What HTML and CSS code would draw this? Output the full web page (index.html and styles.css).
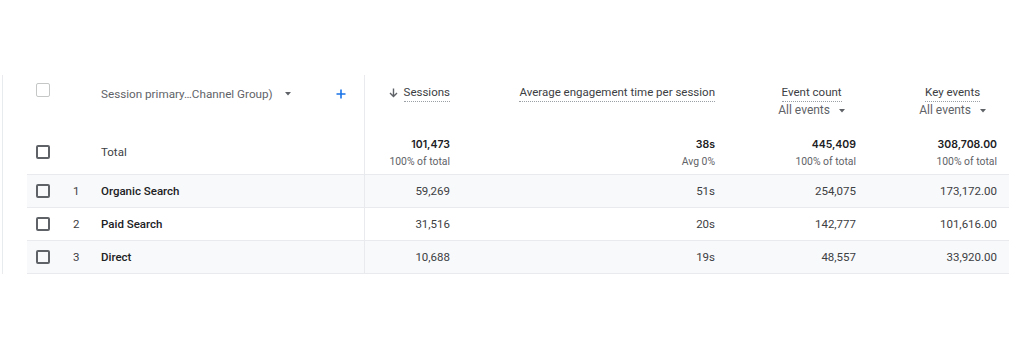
FILE: index.html
```html
<!DOCTYPE html>
<html lang="en">
<head>
<meta charset="utf-8">
<title>Report table</title>
<link rel="stylesheet" href="styles.css">
</head>
<body>
<div class="frame">
  <div class="table">
    <div class="row head">
      <div class="cell c-check"><span class="box disabled"></span></div>
      <div class="cell c-idx"></div>
      <div class="cell c-dim">
        <span class="dim-label">Session primary…Channel Group)</span>
        <svg class="caret" width="6" height="4" viewBox="0 0 6 4"><path d="M0 0h6L3 3.5z" fill="#5f6368"/></svg>
        <svg class="plus" width="10" height="10" viewBox="0 0 10 10"><path d="M5 0.5v9M0.5 5h9" stroke="#1a73e8" stroke-width="1.6" fill="none"/></svg>
      </div>
      <div class="cell c-num first">
        <span class="sort">
          <svg class="arrow" width="9" height="10" viewBox="0 0 9 10"><path d="M4.5 0.5v8M1 5l3.5 3.5L8 5" stroke="#5f6368" stroke-width="1.4" fill="none"/></svg>
          <span class="hlabel">Sessions</span>
        </span>
      </div>
      <div class="cell c-num"><span class="hlabel">Average engagement time per session</span></div>
      <div class="cell c-num">
        <span class="hstack">
          <span class="hlabel">Event count</span>
          <span class="picker">All events <svg width="6" height="4" viewBox="0 0 6 4"><path d="M0 0h6L3 3.5z" fill="#5f6368"/></svg></span>
        </span>
      </div>
      <div class="cell c-num last">
        <span class="hstack">
          <span class="hlabel">Key events</span>
          <span class="picker">All events <svg width="6" height="4" viewBox="0 0 6 4"><path d="M0 0h6L3 3.5z" fill="#5f6368"/></svg></span>
        </span>
      </div>
    </div>

    <div class="row total">
      <div class="cell c-check"><span class="box"></span></div>
      <div class="cell c-idx"></div>
      <div class="cell c-dim"><span class="total-label">Total</span></div>
      <div class="cell c-num first"><span class="tval">101,473</span><span class="tsub">100% of total</span></div>
      <div class="cell c-num"><span class="tval">38s</span><span class="tsub">Avg 0%</span></div>
      <div class="cell c-num"><span class="tval">445,409</span><span class="tsub">100% of total</span></div>
      <div class="cell c-num last"><span class="tval">308,708.00</span><span class="tsub">100% of total</span></div>
    </div>

    <div class="row data shade">
      <div class="cell c-check"><span class="box"></span></div>
      <div class="cell c-idx">1</div>
      <div class="cell c-dim"><span class="name">Organic Search</span></div>
      <div class="cell c-num first">59,269</div>
      <div class="cell c-num">51s</div>
      <div class="cell c-num">254,075</div>
      <div class="cell c-num last">173,172.00</div>
    </div>

    <div class="row data">
      <div class="cell c-check"><span class="box"></span></div>
      <div class="cell c-idx">2</div>
      <div class="cell c-dim"><span class="name">Paid Search</span></div>
      <div class="cell c-num first">31,516</div>
      <div class="cell c-num">20s</div>
      <div class="cell c-num">142,777</div>
      <div class="cell c-num last">101,616.00</div>
    </div>

    <div class="row data shade lastrow">
      <div class="cell c-check"><span class="box"></span></div>
      <div class="cell c-idx">3</div>
      <div class="cell c-dim"><span class="name">Direct</span></div>
      <div class="cell c-num first">10,688</div>
      <div class="cell c-num">19s</div>
      <div class="cell c-num">48,557</div>
      <div class="cell c-num last">33,920.00</div>
    </div>
  </div>
</div>
</body>
</html>
```

FILE: styles.css
```css
html, body {
  margin: 0;
  padding: 0;
  background: #ffffff;
}

body {
  font-family: Roboto, "Liberation Sans", Arial, sans-serif;
  color: #202124;
  font-size: 11.5px;
}

.frame {
  margin: 75px 0 0 2px;
  border-left: 1px solid #e8eaed;
  padding-left: 24px;
  width: 982px;
}

.table {
  display: flex;
  flex-direction: column;
}

.row {
  display: grid;
  grid-template-columns: 35px 39px 263px 96px 265px 141px 143px;
}

.cell {
  display: flex;
  align-items: center;
  box-sizing: border-box;
}

.c-check {
  padding-left: 9px;
}

.c-idx {
  padding-left: 11px;
  color: #3c4043;
}

.c-num {
  justify-content: flex-end;
  padding-right: 10px;
  text-align: right;
}

.c-num.first {
  border-left: 1px solid #e8eaed;
}

.c-num.last {
  padding-right: 12px;
}

.box {
  display: block;
  width: 14px;
  height: 14px;
  box-sizing: border-box;
  border: 2px solid #5f6368;
  border-radius: 2px;
}

.box.disabled {
  border: 1.5px solid #c4c7c5;
}

/* header */
.head {
  height: 51px;
}

.head .cell {
  align-items: flex-start;
  padding-top: 8px;
}

.head .c-check {
  padding-top: 8px;
}

.head .c-dim {
  padding-top: 12px;
  align-items: flex-start;
}

.dim-label {
  color: #5f6368;
  font-size: 11.7px;
  line-height: 14px;
}

.caret {
  margin: 5px 0 0 12px;
}

.plus {
  margin: 2px 18px 0 auto;
}

.head .c-num {
  padding-top: 11px;
}

.sort {
  display: inline-flex;
  align-items: center;
  gap: 6px;
}

.arrow {
  margin-top: -2px;
}

.hlabel {
  color: #3c4043;
  font-size: 11.5px;
  line-height: 13px;
  padding-bottom: 2px;
  border-bottom: 1px dotted #9aa0a6;
}

.hstack {
  display: inline-flex;
  flex-direction: column;
  align-items: center;
  margin-right: 11px;
}

.picker {
  color: #5f6368;
  font-size: 12px;
  line-height: 15px;
  margin-top: 1px;
  display: inline-flex;
  align-items: center;
  gap: 9px;
}

/* total */
.total {
  height: 48px;
}

.total .cell {
  padding-top: 4px;
}

.total .c-num {
  flex-direction: column;
  align-items: flex-end;
  justify-content: center;
}

.total-label {
  color: #3c4043;
  font-size: 11.5px;
}

.tval {
  font-family: Inter, Roboto, sans-serif;
  font-weight: 600;
  font-size: 10.5px;
  line-height: 15px;
  color: #202124;
}

.tsub {
  font-size: 10.4px;
  line-height: 12px;
  margin-top: 4px;
  color: #5f6368;
}

/* data rows */
.data {
  height: 33px;
  border-top: 1px solid #e8eaed;
  box-sizing: border-box;
}

.data.shade {
  background: #f8f9fa;
}

.data.lastrow {
  height: 34px;
  border-bottom: 1px solid #e8eaed;
}

.data .c-num {
  color: #3c4043;
  font-size: 11.5px;
}

.name {
  font-weight: 500;
  color: #202124;
}
```
